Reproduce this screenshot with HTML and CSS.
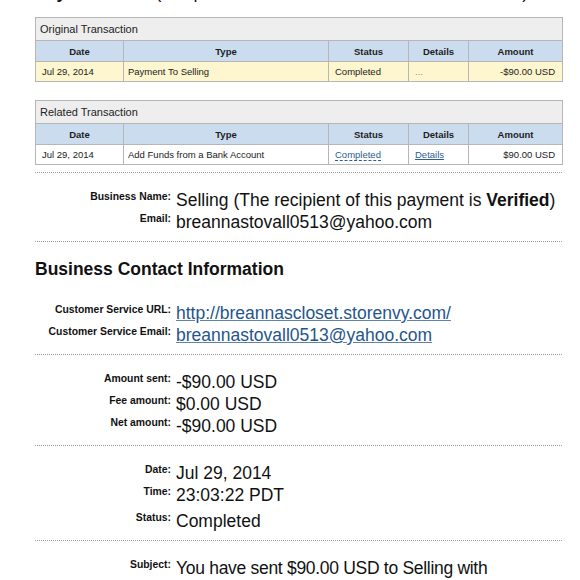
FILE: index.html
```html
<!DOCTYPE html>
<html>
<head>
<meta charset="utf-8">
<link rel="stylesheet" href="styles.css">
</head>
<body>
<div class="page">
  <h1 class="top-title">Payment Sent <span class="tid">(Unique Transaction ID #5KT34817VR2469053)</span></h1>

  <table class="txn">
    <colgroup><col class="c-date"><col class="c-type"><col class="c-status"><col class="c-details"><col class="c-amount"></colgroup>
    <tr class="title"><td colspan="5">Original Transaction</td></tr>
    <tr class="head"><th>Date</th><th>Type</th><th>Status</th><th>Details</th><th>Amount</th></tr>
    <tr class="row hl"><td>Jul 29, 2014</td><td>Payment To Selling</td><td>Completed</td><td class="muted">...</td><td class="amt">-$90.00 USD</td></tr>
  </table>

  <table class="txn second">
    <colgroup><col class="c-date"><col class="c-type"><col class="c-status"><col class="c-details"><col class="c-amount"></colgroup>
    <tr class="title"><td colspan="5">Related Transaction</td></tr>
    <tr class="head"><th>Date</th><th>Type</th><th>Status</th><th>Details</th><th>Amount</th></tr>
    <tr class="row"><td>Jul 29, 2014</td><td>Add Funds from a Bank Account</td><td><a class="dash-link" href="#">Completed</a></td><td><a class="tlink" href="#">Details</a></td><td class="amt">$90.00 USD</td></tr>
  </table>

  <div class="sec first">
    <div class="kv"><div class="k">Business Name:</div><div class="v">Selling (The recipient of this payment is <b>Verified</b>)</div></div>
    <div class="kv"><div class="k">Email:</div><div class="v">breannastovall0513@yahoo.com</div></div>
  </div>

  <div class="sec contact">
    <h2 class="sec-title">Business Contact Information</h2>
    <div class="kv"><div class="k">Customer Service URL:</div><div class="v"><a class="vlink" href="#">http://breannascloset.storenvy.com/</a></div></div>
    <div class="kv"><div class="k">Customer Service Email:</div><div class="v"><a class="vlink" href="#">breannastovall0513@yahoo.com</a></div></div>
  </div>

  <div class="sec">
    <div class="kv"><div class="k">Amount sent:</div><div class="v">-$90.00 USD</div></div>
    <div class="kv"><div class="k">Fee amount:</div><div class="v">$0.00 USD</div></div>
    <div class="kv"><div class="k">Net amount:</div><div class="v">-$90.00 USD</div></div>
  </div>

  <div class="sec">
    <div class="kv"><div class="k">Date:</div><div class="v">Jul 29, 2014</div></div>
    <div class="kv"><div class="k">Time:</div><div class="v">23:03:22 PDT</div></div>
    <div class="kv spaced"><div class="k">Status:</div><div class="v">Completed</div></div>
  </div>

  <div class="sec">
    <div class="kv"><div class="k">Subject:</div><div class="v subject">You have sent $90.00 USD to Selling with</div></div>
  </div>
</div>
</body>
</html>
```

FILE: styles.css
```css
html, body {
  margin: 0;
  padding: 0;
  background: #ffffff;
  overflow: hidden;
}

.page {
  font-family: "Liberation Sans", Arial, Helvetica, sans-serif;
  color: #111111;
  width: 527px;
  padding: 0 18px 0 35px;
}

.top-title {
  font-size: 17.5px;
  line-height: 22px;
  font-weight: bold;
  margin: -19px 0 14px 0;
  white-space: nowrap;
}

.tid {
  font-weight: normal;
}

.txn {
  width: 527px;
  table-layout: fixed;
  border-collapse: collapse;
  border: 1px solid #b6b6b6;
  font-size: 9.5px;
  color: #222222;
}

.txn.second {
  margin-top: 18px;
}

.c-date { width: 88px; }
.c-type { width: 205px; }
.c-status { width: 80px; }
.c-details { width: 60px; }
.c-amount { width: 94px; }

.txn td,
.txn th {
  border: 1px solid #b6b6b6;
  padding: 0 6px;
  white-space: nowrap;
  overflow: hidden;
}

.txn .title td {
  background: #eeeeee;
  font-size: 11px;
  height: 22px;
  padding: 0 4px;
  color: #222222;
}

.txn .head th {
  background: #cadcee;
  font-weight: bold;
  text-align: center;
  height: 20px;
  color: #1e1e1e;
}

.txn .row td {
  height: 19px;
  background: #ffffff;
}

.txn .row td:nth-child(2) {
  padding-left: 4px;
}

.txn .row.hl td {
  background: #fdf6cf;
}

.txn .muted {
  color: #8a8a8a;
}

.txn .amt {
  text-align: right;
  padding-right: 7px;
}

.dash-link {
  color: #2d5e93;
  text-decoration: none;
  border-bottom: 1px dashed #2d5e93;
}

.tlink {
  color: #2d5e93;
  text-decoration: underline;
}

.sec {
  border-top: 1px dotted #9c9c9c;
  padding: 16px 0 8px 0;
}

.sec.first {
  margin-top: 7px;
}

.sec.contact {
  padding-top: 16px;
}

.sec-title {
  font-size: 17.5px;
  line-height: 22px;
  font-weight: bold;
  margin: 0 0 22px 0;
  color: #111111;
}

.kv {
  display: grid;
  grid-template-columns: 136px 1fr;
  column-gap: 5px;
  align-items: start;
}

.kv.spaced {
  margin-top: 4px;
}

.k {
  font-size: 10.4px;
  line-height: 12px;
  font-weight: bold;
  text-align: right;
  padding-top: 2px;
  white-space: nowrap;
  color: #111111;
}

.v {
  font-size: 17.5px;
  line-height: 22px;
  color: #111111;
  white-space: nowrap;
}

.v.subject {
  letter-spacing: -0.3px;
}

.vlink {
  color: #24558d;
  text-decoration: underline;
  text-decoration-color: #5f82aa;
}
```
